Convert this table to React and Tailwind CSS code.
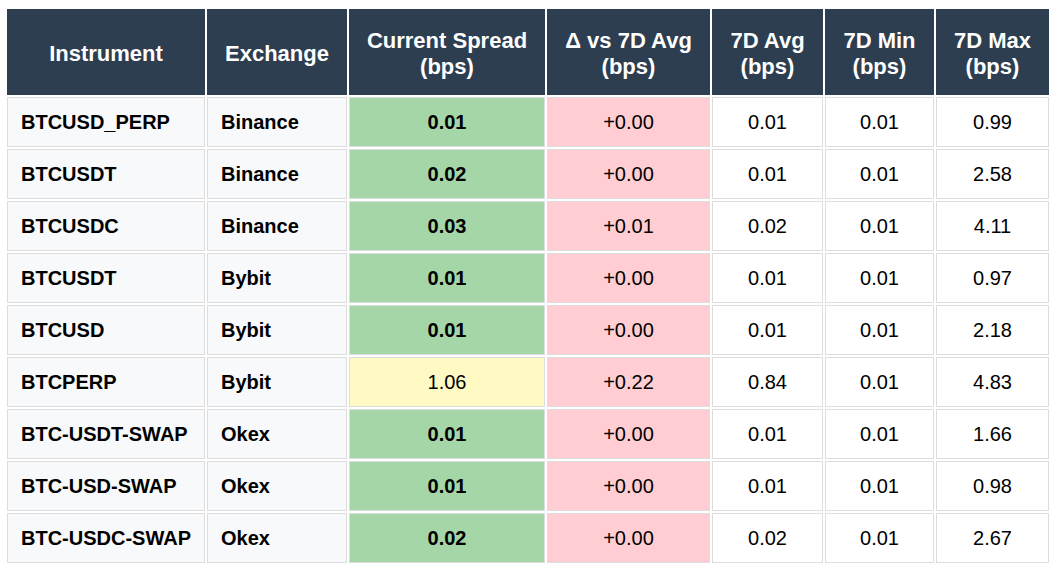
import React from "react";

// Spread monitor table: current quoted spread vs trailing 7D stats.
const ROWS = [
  { instrument: "BTCUSD_PERP", exchange: "Binance", spread: "0.01", delta: "+0.00", avg: "0.01", min: "0.01", max: "0.99", level: "ok" },
  { instrument: "BTCUSDT", exchange: "Binance", spread: "0.02", delta: "+0.00", avg: "0.01", min: "0.01", max: "2.58", level: "ok" },
  { instrument: "BTCUSDC", exchange: "Binance", spread: "0.03", delta: "+0.01", avg: "0.02", min: "0.01", max: "4.11", level: "ok" },
  { instrument: "BTCUSDT", exchange: "Bybit", spread: "0.01", delta: "+0.00", avg: "0.01", min: "0.01", max: "0.97", level: "ok" },
  { instrument: "BTCUSD", exchange: "Bybit", spread: "0.01", delta: "+0.00", avg: "0.01", min: "0.01", max: "2.18", level: "ok" },
  { instrument: "BTCPERP", exchange: "Bybit", spread: "1.06", delta: "+0.22", avg: "0.84", min: "0.01", max: "4.83", level: "warn" },
  { instrument: "BTC-USDT-SWAP", exchange: "Okex", spread: "0.01", delta: "+0.00", avg: "0.01", min: "0.01", max: "1.66", level: "ok" },
  { instrument: "BTC-USD-SWAP", exchange: "Okex", spread: "0.01", delta: "+0.00", avg: "0.01", min: "0.01", max: "0.98", level: "ok" },
  { instrument: "BTC-USDC-SWAP", exchange: "Okex", spread: "0.02", delta: "+0.00", avg: "0.02", min: "0.01", max: "2.67", level: "ok" },
];

const HEADERS = [
  { label: ["Instrument"], width: "w-[198px]" },
  { label: ["Exchange"], width: "w-[140px]" },
  { label: ["Current Spread", "(bps)"], width: "w-[196px]" },
  { label: ["Δ vs 7D Avg", "(bps)"], width: "w-[163px]" },
  { label: ["7D Avg", "(bps)"], width: "w-[111px]" },
  { label: ["7D Min", "(bps)"], width: "w-[109px]" },
  { label: ["7D Max", "(bps)"], width: "w-[113px]" },
];

const cell = "border border-[#dddddd] h-[50px] px-[13px] py-0";

export default function App() {
  return (
    <div
      className="bg-white pl-[5px] pt-[7px] text-black"
      style={{ fontFamily: '"Liberation Sans", Arial, Helvetica, sans-serif' }}
    >
      <table className="table-fixed border-separate border-spacing-[2px] w-[1046px]">
        <thead>
          <tr>
            {HEADERS.map((h) => (
              <th
                key={h.label[0]}
                className={`${h.width} h-[86px] bg-[#2c3e50] border border-[#2c3e50] text-white text-[22px] font-bold leading-[26px] text-center px-1 pt-[4px] pb-0`}
              >
                {h.label.map((line) => (
                  <div key={line}>{line}</div>
                ))}
              </th>
            ))}
          </tr>
        </thead>
        <tbody className="text-[20px] leading-[24px]">
          {ROWS.map((r, i) => (
            <tr key={i}>
              <td className={`${cell} bg-[#f8f9fa] font-bold text-left`}>{r.instrument}</td>
              <td className={`${cell} bg-[#f8f9fa] font-bold text-left`}>{r.exchange}</td>
              <td
                className={`${cell} text-center ${
                  r.level === "warn" ? "bg-[#fff9c4] font-normal" : "bg-[#a5d6a7] font-bold"
                }`}
              >
                {r.spread}
              </td>
              <td className={`${cell} bg-[#ffcdd2] text-center`}>{r.delta}</td>
              <td className={`${cell} bg-white text-center`}>{r.avg}</td>
              <td className={`${cell} bg-white text-center`}>{r.min}</td>
              <td className={`${cell} bg-white text-center`}>{r.max}</td>
            </tr>
          ))}
        </tbody>
      </table>
    </div>
  );
}
